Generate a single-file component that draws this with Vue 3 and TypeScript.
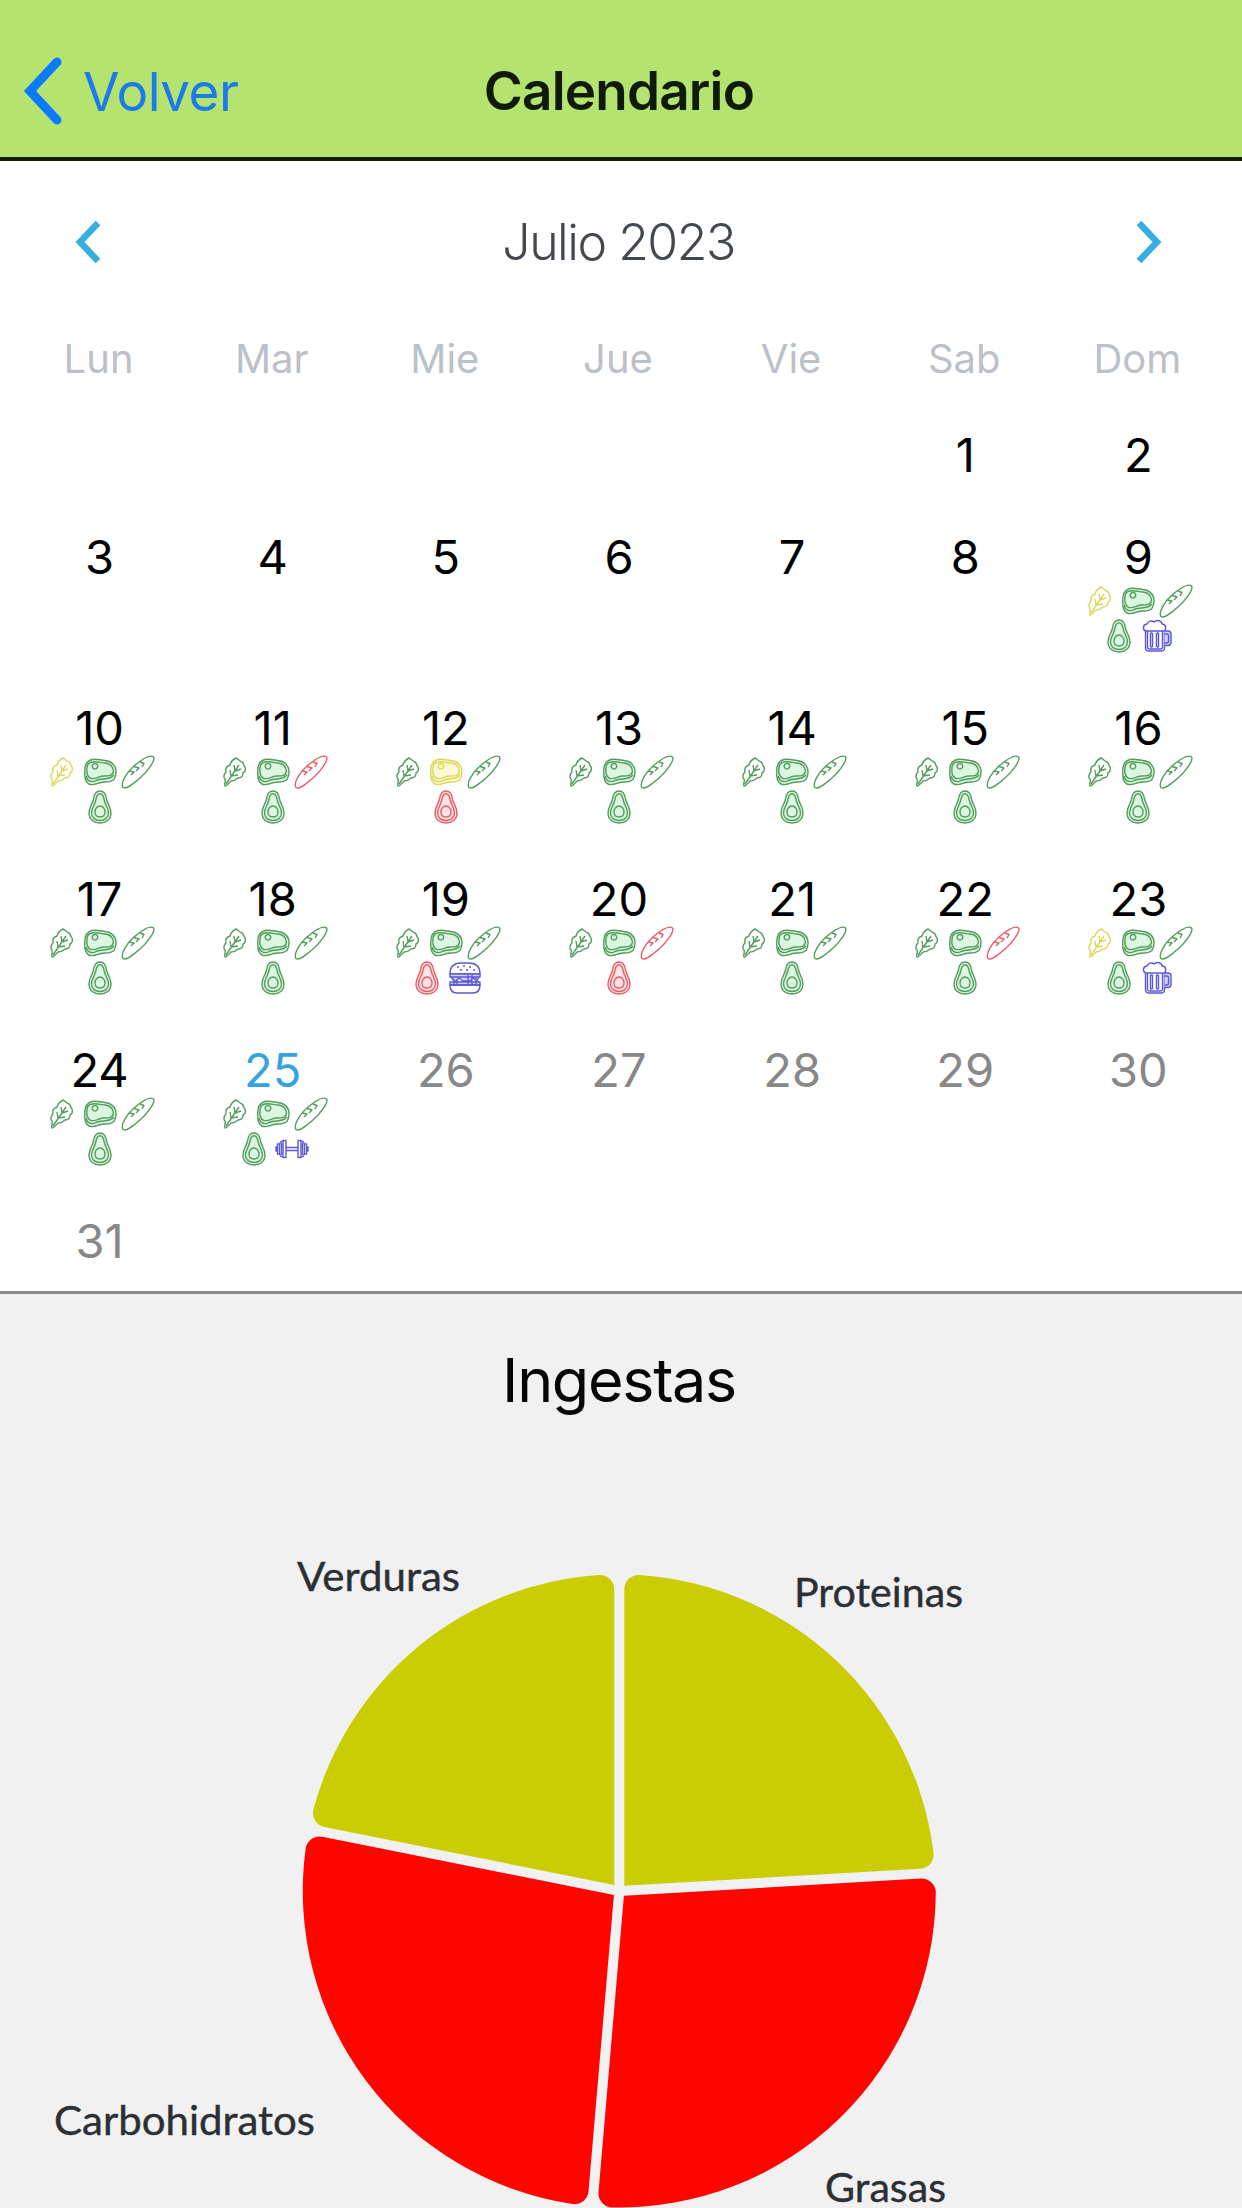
<script setup lang="ts">
type Tone = 'g' | 'y' | 'r' | 'b'
type IconName = 'leaf' | 'steak' | 'bread' | 'avocado' | 'beer' | 'burger' | 'dumbbell'
interface Mark { icon: IconName; tone: Tone }
interface Day { n: number | null; state: string; marks: Mark[] }

const weekdays = ['Lun', 'Mar', 'Mie', 'Jue', 'Vie', 'Sab', 'Dom']

// Tones of leaf, steak, bread and avocado, followed by an optional extra
const log: Record<number, [string, IconName?]> = {
  9: ['yggg', 'beer'],
  10: ['yggg'], 11: ['ggrg'], 12: ['gygr'], 13: ['gggg'], 14: ['gggg'], 15: ['gggg'], 16: ['gggg'],
  17: ['gggg'], 18: ['gggg'], 19: ['gggr', 'burger'], 20: ['ggrr'], 21: ['gggg'], 22: ['ggrg'], 23: ['yggg', 'beer'],
  24: ['gggg'], 25: ['gggg', 'dumbbell'],
}
const meals: IconName[] = ['leaf', 'steak', 'bread', 'avocado']
const today = 25
const leading = 5

const weeks: Day[][] = Array.from({ length: 6 }, (_, w) =>
  Array.from({ length: 7 }, (_, d): Day => {
    const n = w * 7 + d - leading + 1
    if (n < 1 || n > 31) return { n: null, state: '', marks: [] }
    const entry = log[n]
    const marks: Mark[] = entry ? meals.map((icon, i) => ({ icon, tone: entry[0][i] as Tone })) : []
    if (entry && entry[1]) marks.push({ icon: entry[1], tone: 'b' })
    return { n, state: n === today ? 'today' : n > today ? 'future' : '', marks }
  }),
)

const icons: Record<IconName, string[]> = {
  leaf: [
    'M7 31C6 29 8 27 7 24C5 22 6 19 8 17C7 13 9 11 12 10C13 6 16 4 18 3C20 4 21 6 24 7C26 8 25 10 27 12C28 15 27 17 25 18C25 21 23 23 20 23C18 25 15 26 13 26C11 28 9 31 7 31Z',
    'M8 29L21 10M13 21L12 15M13 21L20 20M17 16L16 10M17 16L23 14',
  ],
  steak: [
    'M9 4.5C13 3.5 18 5 22 5.500C27 6 31 9 32.500 13C33.500 17 33 21 31 24.500C27 28 22 26.500 18 27.500C14 28.500 10 31 6 29C2 27 1.500 22 1.800 17C1.500 11 3 6 9 4.500Z',
    'M9 7C14 6 18 8 22 8C27 8.500 30 12 30.500 16C30 21 26 21 21 21C16 21 13 24.500 8 23.500C4 22 3.500 17 4 13C4 10 5.500 7.500 9 7Z',
    'M12 8.500A2.800 2.800 0 1 1 11.900 8.500M3 21C4 26 9 28 13 25.500C19 22.500 26 26 31 20',
  ],
  bread: [
    'M2 32.500C-1 28 6 17 13 11C20 5 29 -1 32.500 2C35 5 26 17 19 23C12 29 5 35 2 32.500Z',
    'M8 16L13 17L10 20M13 11.500L18 13L15 16M19 7L23 8.500L21 12',
  ],
  avocado: [
    'M17 1C21 1 23 5 23.500 9C24.500 14 28 17 28 23C28 29.500 23 33 17 33C11 33 6 29.500 6 23C6 17 9.500 14 10.500 9C11 5 13 1 17 1Z',
    'M17 3.800C19.500 3.800 20.700 7 21.200 10C22.200 15 25.500 18 25.500 23C25.500 28 21.500 30.500 17 30.500C12.500 30.500 8.500 28 8.500 23C8.500 18 11.800 15 12.800 10C13.300 7 14.500 3.800 17 3.800Z',
    'M17 16C20 16 22 19 22 22C22 25 20 27 17 27C14 27 12 25 12 22C12 19 14 16 17 16Z',
  ],
  beer: [
    'M6 12C2 11 3 5 7 5C8 2 12 1 14 3C17 0 22 2 22 5C26 5 27 10 24 12Z',
    'M5.500 12V29C5.500 31 7 32 9 32H21C23 32 24.500 31 24.500 29V12M7.500 12V29L9 30H21L22.500 29V12',
    'M24.500 12H28C30 12 31 13 31 15V23C31 25 30 26.500 28 26.500H24.500M24.500 15H27C28 15 28.500 15.500 28.500 16.500V22C28.500 23 28 24 27 24H24.500',
    'M10.500 14V28M12.500 14V28M10.500 14H12.500M10.500 28H12.500M16.500 14V28M18.500 14V28M16.500 14H18.500M16.500 28H18.500',
  ],
  burger: [
    'M2 13C2 5 7 2 13 2H21C27 2 32 5 32 13Z',
    'M9 6H11M15 5H17M21 6H23M12 9H14M18 9H20M25 9H27',
    'M2 13H32V16H2ZM3 16L7 21L11 17L15 20H22L25 17L29 20L31 16M2 21H32V24H2ZM6 18V25M9 18V23M20 14V23M24 14V23M28 17V23',
    'M2 24H32C32 30 29 32 25 32H9C5 32 2 30 2 24Z',
  ],
  dumbbell: [
    'M8 8.500H11V25.500H8ZM23 8.500H26V25.500H23ZM8 9C4.500 9 4.500 12 4.500 17C4.500 22 4.500 25 8 25M26 9C29.500 9 29.500 12 29.500 17C29.500 22 29.500 25 26 25',
    'M11 15.500H23M11 18.500H23M4.500 12H2.500V22H4.500M29.500 12H31.500V22H29.500M6.500 11V23M27.500 11V23M2.500 15H1V19H2.500M31.500 15H33V19H31.500',
  ],
}

// Pie geometry: straight gaps between slices, rounded outer corners
const cx = 619.3
const cy = 451
const R = 316.5
const gap = 5
const corner = 14

function slice(a0: number, a1: number): string {
  const rad = (d: number) => (d * Math.PI) / 180
  const s = rad(a0)
  const e = rad(a1)
  const at = (angle: number, r: number, side = 0): string => {
    const x = cx + Math.sin(angle) * r + Math.cos(angle) * side
    const y = cy - Math.cos(angle) * r + Math.sin(angle) * side
    return `${x.toFixed(2)} ${y.toFixed(2)}`
  }
  const along = Math.sqrt((R - corner) ** 2 - (gap + corner) ** 2)
  const swing = Math.asin((gap + corner) / (R - corner))
  const half = (e - s) / 2
  const arc = `A${corner} ${corner} 0 0 1 `
  return `M${at(s + half, gap / Math.sin(half))}L${at(s, along, gap)}${arc}${at(s + swing, R)}A${R} ${R} 0 0 1 ${at(e - swing, R)}${arc}${at(e, along, -gap)}Z`
}

const slices = [
  { d: slice(0, 86.7), fill: '#cbcd03' },
  { d: slice(86.7, 184.9), fill: '#ff0500' },
  { d: slice(184.9, 281.3), fill: '#ff0500' },
  { d: slice(281.3, 360), fill: '#cbcd03' },
]
const labels = [
  { text: 'Verduras', x: 297, y: 150.5, w: 163 },
  { text: 'Proteinas', x: 794, y: 166.5, w: 169 },
  { text: 'Carbohidratos', x: 54, y: 695, w: 261 },
  { text: 'Grasas', x: 825, y: 762, w: 121 },
]
</script>

<template>
  <div class="screen">
    <header class="bar">
      <div class="back">
        <svg width="42" height="70" viewBox="0 0 42 70"><path d="M35 6L8 35L35 64" /></svg>
        <span>Volver</span>
      </div>
      <h1>Calendario</h1>
      <div class="bar-end"></div>
    </header>

    <section class="calendar">
      <div class="month">
        <svg width="32" height="48" viewBox="0 0 32 48"><path d="M25 5L7 24L25 43" /></svg>
        <span>Julio 2023</span>
        <svg width="32" height="48" viewBox="0 0 32 48"><path d="M7 5L25 24L7 43" /></svg>
      </div>
      <div class="weekdays">
        <span v-for="d in weekdays" :key="d">{{ d }}</span>
      </div>
      <div v-for="(week, w) in weeks" :key="w" class="week">
        <div v-for="(day, i) in week" :key="i" class="day">
          <span class="num" :class="day.state">{{ day.n }}</span>
          <div v-if="day.marks.length" class="marks">
            <svg v-for="m in day.marks" :key="m.icon" :class="['mark', m.tone, m.icon]" viewBox="0 0 34 34">
              <path v-for="(p, k) in icons[m.icon]" :key="k" :d="p" />
            </svg>
          </div>
        </div>
      </div>
    </section>

    <section class="chart">
      <h2>Ingestas</h2>
      <svg class="pie" width="1242" height="768" viewBox="0 0 1242 768">
        <path v-for="(s, i) in slices" :key="i" :d="s.d" :fill="s.fill" />
        <text v-for="l in labels" :key="l.text" :x="l.x" :y="l.y" :textLength="l.w" lengthAdjust="spacingAndGlyphs">{{ l.text }}</text>
      </svg>
    </section>
  </div>
</template>

<style>
body {
  margin: 0;
  background: #f1f1f1;
}
</style>

<style scoped>
.screen {
  width: 1242px;
  height: 2208px;
  overflow: hidden;
  display: flex;
  flex-direction: column;
  background: #fff;
  font-family: Inter, "Liberation Sans", sans-serif;
}
.bar {
  box-sizing: border-box;
  height: 161px;
  flex: none;
  display: grid;
  grid-template-columns: 1fr auto 1fr;
  align-items: center;
  padding: 24px 4px 0 0;
  background: #b5e370;
  border-bottom: 4px solid #101c04;
}
.back {
  display: flex;
  align-items: center;
  padding-left: 22px;
  gap: 19px;
  color: #1b7aec;
  font-size: 53px;
  line-height: 64px;
  letter-spacing: -0.5px;
}
.back span {
  padding-top: 3px;
}
.back path {
  fill: none;
  stroke: #0a7aff;
  stroke-width: 9;
  stroke-linecap: round;
  stroke-linejoin: miter;
}
.back svg {
  flex: none;
  margin: -3px 0;
}
h1 {
  margin: 0;
  padding-top: 1px;
  font-size: 53px;
  line-height: 64px;
  font-weight: 600;
  letter-spacing: -0.8px;
  color: #0f1a08;
}
.calendar {
  box-sizing: border-box;
  height: 1133px;
  flex: none;
  padding: 41px 18px 0 12px;
  border-bottom: 3px solid #8a8a8a;
}
.month {
  display: flex;
  justify-content: space-between;
  align-items: center;
  height: 80px;
  padding: 0 60px 0 61px;
  font-size: 50px;
  font-weight: 350;
  letter-spacing: -1.5px;
  color: #43484f;
}
.month path {
  fill: none;
  stroke: #35aee2;
  stroke-width: 6.5;
}
.weekdays {
  display: grid;
  grid-template-columns: repeat(7, 1fr);
  margin-top: 53px;
  height: 48px;
  line-height: 48px;
  font-size: 40px;
  color: #bcc1c8;
  text-align: center;
}
.week {
  display: grid;
  grid-template-columns: repeat(7, 1fr);
}
.weekdays + .week {
  margin-top: 19px;
}
.day {
  display: flex;
  flex-direction: column;
  align-items: center;
  padding-left: 2px;
}
.num {
  height: 102px;
  line-height: 106px;
  margin-bottom: -22px;
  font-size: 47px;
  color: #000;
}
.num + .marks {
  margin-bottom: 21px;
}
.num:last-child {
  margin-bottom: 0;
}
.today {
  color: #35a3e0;
}
.future {
  color: #888;
}
.marks {
  width: 116px;
  height: 70px;
  display: flex;
  flex-wrap: wrap;
  justify-content: center;
  align-content: flex-start;
  row-gap: 1px;
  column-gap: 4px;
}
.mark {
  width: 34px;
  height: 34px;
}
.mark path {
  fill: none;
  stroke: currentColor;
  stroke-width: 1.4;
  stroke-linejoin: round;
}
.g { color: #529c5d; }
.g.steak path:first-child,
.g.avocado path:first-child { fill: #dcf7df; }
.y { color: #dcd75c; }
.r { color: #ea5c66; }
.r.avocado path:first-child { fill: #fde3e5; }
.y.steak path:first-child { fill: #fbfad2; }
.b { color: #5b57d6; }
.b path:nth-child(3) { fill: #d3d2fa; }
.chart {
  flex: 1;
  display: flex;
  flex-direction: column;
  align-items: center;
  background: #f1f1f1;
}
h2 {
  margin: 48px 4px 0 0;
  height: 98px;
  line-height: 76px;
  font-size: 61px;
  font-weight: 400;
  letter-spacing: -1.3px;
  color: #050505;
}
.pie {
  flex: none;
  display: block;
}
.pie text {
  font-family: Lato, "Open Sans", sans-serif;
  font-size: 41px;
  fill: #2c2f33;
  stroke: #2c2f33;
  stroke-width: 0.4;
}
</style>
